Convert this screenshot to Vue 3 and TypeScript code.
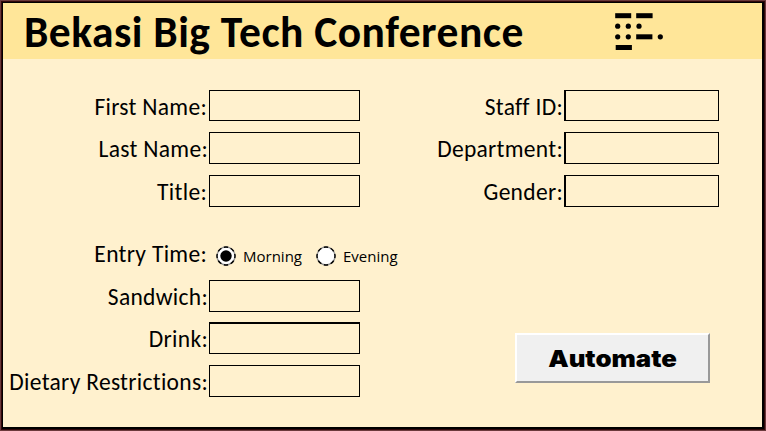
<script setup lang="ts">
import { ref } from 'vue'

interface Field {
  id: string
  label: string
}

const leftFields: Field[] = [
  { id: 'first-name', label: 'First Name:' },
  { id: 'last-name', label: 'Last Name:' },
  { id: 'title', label: 'Title:' },
]
const rightFields: Field[] = [
  { id: 'staff-id', label: 'Staff ID:' },
  { id: 'department', label: 'Department:' },
  { id: 'gender', label: 'Gender:' },
]
const mealFields: Field[] = [
  { id: 'sandwich', label: 'Sandwich:' },
  { id: 'drink', label: 'Drink:' },
  { id: 'dietary', label: 'Dietary Restrictions:' },
]
const times = ['Morning', 'Evening']
const entryTime = ref('Morning')
const values = ref<Record<string, string>>({})
</script>

<template>
  <main class="window">
    <header class="banner">
      <h1>Bekasi Big Tech Conference</h1>
      <svg class="logo" width="50" height="38" viewBox="0 0 50 38" aria-hidden="true">
        <rect x="0.2" y="0.2" width="16" height="5" />
        <rect x="21.2" y="0.2" width="16.4" height="5" />
        <circle cx="2.7" cy="13.2" r="2.6" />
        <circle cx="13.3" cy="13.2" r="2.6" />
        <circle cx="24" cy="13.2" r="2.6" />
        <circle cx="2.7" cy="23.8" r="2.6" />
        <circle cx="13.3" cy="23.8" r="2.6" />
        <rect x="21.2" y="21.3" width="16.2" height="5" />
        <circle cx="45.3" cy="23.8" r="2.6" />
        <rect x="0.7" y="32" width="16.2" height="5" />
      </svg>
    </header>

    <form class="form" @submit.prevent>
      <div class="column left">
        <div v-for="f in leftFields" :key="f.id" class="row" :class="f.id">
          <label :for="f.id">{{ f.label }}</label>
          <input :id="f.id" v-model="values[f.id]" type="text" />
        </div>
        <div class="row entry">
          <span class="label">Entry Time:</span>
          <div class="options">
            <label v-for="t in times" :key="t" class="option">
              <input v-model="entryTime" type="radio" name="entry" :value="t" />
              <svg width="20" height="20" viewBox="0 0 20 20" aria-hidden="true">
                <circle class="ring" cx="10" cy="10" r="9" />
                <circle class="dashes" cx="10" cy="10" r="9" pathLength="64" />
                <circle v-if="entryTime === t" cx="10" cy="10" r="5.7" />
              </svg>
              <span>{{ t }}</span>
            </label>
          </div>
        </div>
        <div v-for="f in mealFields" :key="f.id" class="row" :class="f.id">
          <label :for="f.id">{{ f.label }}</label>
          <input :id="f.id" v-model="values[f.id]" type="text" />
        </div>
      </div>

      <div class="column right">
        <div v-for="f in rightFields" :key="f.id" class="row" :class="f.id">
          <label :for="f.id">{{ f.label }}</label>
          <input :id="f.id" v-model="values[f.id]" type="text" />
        </div>
        <button type="button"><span>Automate</span></button>
      </div>
    </form>
  </main>
</template>

<style>
body {
  margin: 0;
}
</style>

<style scoped>
.window {
  box-sizing: border-box;
  width: 766px;
  height: 431px;
  padding: 3px 4px 4px 3px;
  background: #fff1ce;
  box-shadow: inset 0 0 0 1px #6b3a3c, inset 0 0 0 2px #32070a, inset 0 0 0 3px #000, inset -1px -1px 0 3px #000;
  font-family: Carlito, Lato, sans-serif;
  color: #000;
}
.banner {
  display: flex;
  height: 56px;
  background: #ffe699;
}
h1 {
  margin: 0 0 0 21px;
  width: 591px;
  font-size: 43.5px;
  line-height: 60px;
  font-weight: 700;
  letter-spacing: 0.48px;
  white-space: nowrap;
}
.logo {
  margin-top: 10px;
}
.form {
  display: flex;
  padding-top: 31px;
}
.column {
  display: flex;
  flex-direction: column;
}
.left {
  width: 357px;
}
.right {
  width: 359px;
}
.row {
  display: flex;
  justify-content: flex-end;
  height: 42px;
}
.row.last-name,
.row.department,
.row.drink,
.row.entry {
  height: 43px;
}
.row > label,
.row > .label {
  font-size: 23.5px;
  line-height: 34px;
  letter-spacing: 0.3px;
  white-space: nowrap;
  margin-right: 1px;
}
.row.first-name > label,
.row.title > label,
.row.entry > .label {
  margin-right: 2px;
}
.row > input {
  box-sizing: border-box;
  width: 151px;
  height: 32px;
  padding: 2px 4px;
  border: 1px solid #000;
  border-radius: 0;
  background: transparent;
  outline: none;
}
.row.first-name > input,
.row.staff-id > input {
  height: 31px;
}
.row.drink > input {
  border-top-width: 2px;
}
.right .row > input {
  width: 155px;
  border-left-width: 2px;
}
.row.entry {
  margin-top: 20px;
}
.options {
  display: flex;
  width: 151px;
}
.option {
  display: flex;
  align-items: center;
  flex: none;
  width: 100px;
  height: 38px;
  font-family: "Open Sans", "Noto Sans", sans-serif;
  font-size: 15px;
}
.option:first-child {
  margin-left: 7px;
}
.option input {
  position: absolute;
  opacity: 0;
}
.option span {
  margin: -1px 0 0 7px;
}
.ring {
  fill: #fff;
  stroke: #999;
  stroke-width: 1.4;
}
.dashes {
  fill: none;
  stroke: #000;
  stroke-width: 1.4;
  stroke-dasharray: 5 3;
  stroke-dashoffset: 2.5;
}
button {
  box-sizing: border-box;
  align-self: flex-end;
  width: 195px;
  height: 50px;
  margin: 116px 9px 0 0;
  padding: 2px 0 0;
  border: 2px solid;
  border-color: #fff #999 #999 #fff;
  border-radius: 0;
  background: #f0f0f0;
  font-family: Inter, "Liberation Sans", sans-serif;
  font-size: 23px;
  font-weight: 900;
  color: #000;
}
button span {
  display: block;
  transform: scaleX(1.12);
}
</style>
